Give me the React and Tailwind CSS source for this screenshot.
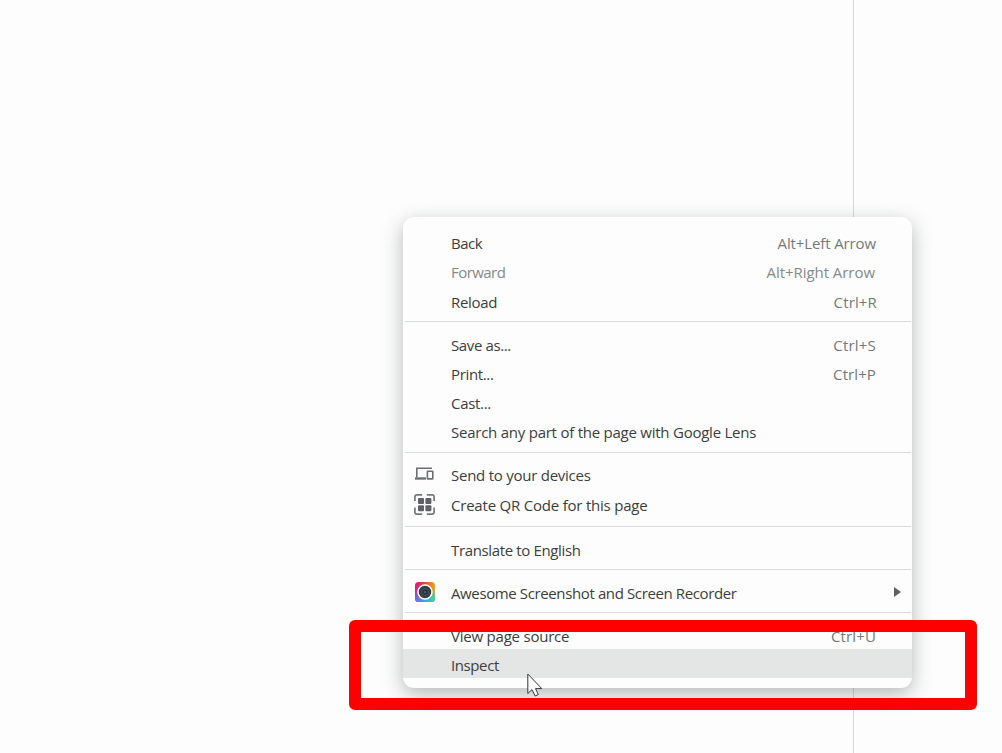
function DevicesIcon() {
  return (
    <svg className="ml-px" width="20" height="14" viewBox="0 0 20 14" fill="none" stroke="#6b7173" strokeWidth="1.6">
      <path d="M17 1.2H1.8V10.5" />
      <path d="M0 11.5H11" strokeWidth="2.4" />
      <rect x="12.4" y="4.2" width="5.4" height="7.7" rx="0.5" />
    </svg>
  );
}

function QrIcon() {
  return (
    <svg width="21" height="21" viewBox="0 0 21 21" fill="none" stroke="#737a7c" strokeWidth="1.7">
      <path d="M0.9 7V3Q0.9 0.9 3 0.9H8.2M12.8 0.9H18Q20.1 0.9 20.1 3V7M20.1 13.5V18Q20.1 20.1 18 20.1H12.8M8.2 20.1H3Q0.9 20.1 0.9 18V13.5" />
      <g fill="#5c6264" stroke="none">
        <rect x="4" y="4" width="6" height="6" rx="1" />
        <rect x="11.4" y="4" width="6" height="6" rx="1" />
        <rect x="4" y="11.2" width="6" height="6" rx="1" />
        <rect x="11.4" y="11.2" width="6" height="6" rx="1" />
      </g>
    </svg>
  );
}

function CameraIcon() {
  return (
    <svg className="ml-px" width="20" height="20" viewBox="0 0 20 20">
      <defs>
        <linearGradient id="top" x1="0" x2="1">
          <stop offset="0" stopColor="#e3168c" />
          <stop offset="0.5" stopColor="#dd4a3c" />
          <stop offset="1" stopColor="#f0a818" />
        </linearGradient>
        <linearGradient id="bottom" x1="0" x2="1">
          <stop offset="0" stopColor="#6c6cf0" />
          <stop offset="0.5" stopColor="#35a9ee" />
          <stop offset="1" stopColor="#2fd8a8" />
        </linearGradient>
        <linearGradient id="fade" x1="0" y1="0" x2="0" y2="1">
          <stop offset="0.3" stopColor="#000" />
          <stop offset="0.85" stopColor="#fff" />
        </linearGradient>
        <mask id="lower">
          <rect width="20" height="20" fill="url(#fade)" />
        </mask>
      </defs>
      <rect width="20" height="20" rx="3.5" fill="url(#top)" />
      <rect width="20" height="20" rx="3.5" fill="url(#bottom)" mask="url(#lower)" />
      <circle cx="10" cy="10" r="7" fill="#343b40" stroke="#fff" strokeWidth="1.5" />
      <circle cx="10" cy="10" r="3.6" fill="#2b363d" stroke="#465761" strokeWidth="0.9" />
      <circle cx="10" cy="10" r="1.1" fill="#45677a" />
    </svg>
  );
}

function Row({ label, keys, icon, arrow, size = "h-[29px] pb-[3px]", drop = "pt-0.5", tone = "text-[#3b3e40]", keyTone = "text-[#757979]", fit = "", keyFit = "pr-9" }) {
  return (
    <div className={`flex items-center whitespace-nowrap ${size} ${tone}`}>
      <span className="flex w-12 shrink-0 items-center pl-[11px]">{icon}</span>
      <span className={`${drop} ${fit}`}>{label}</span>
      {keys && <span className={`ml-auto ${drop} ${keyTone} ${keyFit}`}>{keys}</span>}
      {arrow && (
        <svg className="ml-auto mr-[11px]" width="7" height="10" viewBox="0 0 7 10">
          <path d="M0 0L7 5L0 10Z" fill="#5c6062" />
        </svg>
      )}
    </div>
  );
}

function Separator() {
  return <div className="ml-0.5 mr-px h-px bg-[#d8dcdc]" />;
}

export default function App() {
  return (
    <div className="relative h-[753px] w-[1002px] overflow-hidden bg-[#fdfdfd] font-['Open_Sans','Noto_Sans',sans-serif] text-[15px] leading-5">
      <div className="h-full w-[854px] border-r border-[#d7d9d9]" />

      <div className="absolute left-[403px] top-[217px] flex h-[471px] w-[509px] flex-col rounded-[11px] bg-[#fdfdfd] shadow-[0_6px_20px_rgba(40,50,50,0.34)]">
        <div className="pb-1 pt-[13px]">
          <Row label="Back" drop="pt-0" fit="tracking-[-0.5px]" keys="Alt+Left Arrow" keyFit="pr-9 tracking-[-0.12px]" />
          <Row label="Forward" drop="pt-0" fit="tracking-[-0.55px]" keys="Alt+Right Arrow" tone="text-[#858989]" keyTone="text-[#858989]" keyFit="pr-[37px] tracking-[-0.05px]" />
          <Row label="Reload" fit="tracking-[-0.3px]" keys="Ctrl+R" keyFit="pr-[35px] tracking-[0.15px]" />
        </div>
        <Separator />
        <div className="pb-[5px] pt-[9px]">
          <Row label="Save as..." fit="tracking-[-0.38px]" keys="Ctrl+S" keyFit="pr-9 tracking-[0.2px]" />
          <Row label="Print..." fit="tracking-[-0.35px]" keys="Ctrl+P" keyFit="pr-9 tracking-[0.1px]" />
          <Row label="Cast..." fit="tracking-[-0.3px]" />
          <Row label="Search any part of the page with Google Lens" fit="tracking-[-0.24px]" />
        </div>
        <Separator />
        <div className="pb-[5px] pt-2">
          <Row label="Send to your devices" fit="tracking-[-0.25px]" icon={<DevicesIcon />} />
          <Row label="Create QR Code for this page" fit="tracking-[-0.21px]" icon={<QrIcon />} size="h-[31px] pb-[3px]" />
        </div>
        <Separator />
        <div className="pb-1 pt-[9px]">
          <Row label="Translate to English" fit="tracking-[-0.36px]" />
        </div>
        <Separator />
        <div className="pb-1 pt-[9px]">
          <Row label="Awesome Screenshot and Screen Recorder" fit="tracking-[-0.38px]" icon={<CameraIcon />} arrow />
        </div>
        <Separator />
        <div className="pt-[7px]">
          <Row label="View page source" drop="pt-0" fit="tracking-[-0.22px]" keys="Ctrl+U" keyFit="pr-9 tracking-[0.15px]" size="h-[29px] pt-0.5" />
          <div className="bg-[#e4e6e5]">
            <Row label="Inspect" fit="tracking-[-0.4px]" size="h-[29px] pt-px" />
          </div>
        </div>
      </div>

      <div className="absolute left-[349px] top-[620px] h-[90px] w-[628px] rounded-md border-[12px] border-[#fe0000]" />

      <svg className="absolute left-[527px] top-[673px]" width="17" height="25" viewBox="0 0 17 25">
        <path d="M0.8 1V20.5L5 16.6L8.2 23L11.3 21.5L8.5 15.6H14.8Z" fill="#fdfdfd" stroke="#34363a" strokeWidth="1" strokeLinejoin="round" />
      </svg>
    </div>
  );
}
